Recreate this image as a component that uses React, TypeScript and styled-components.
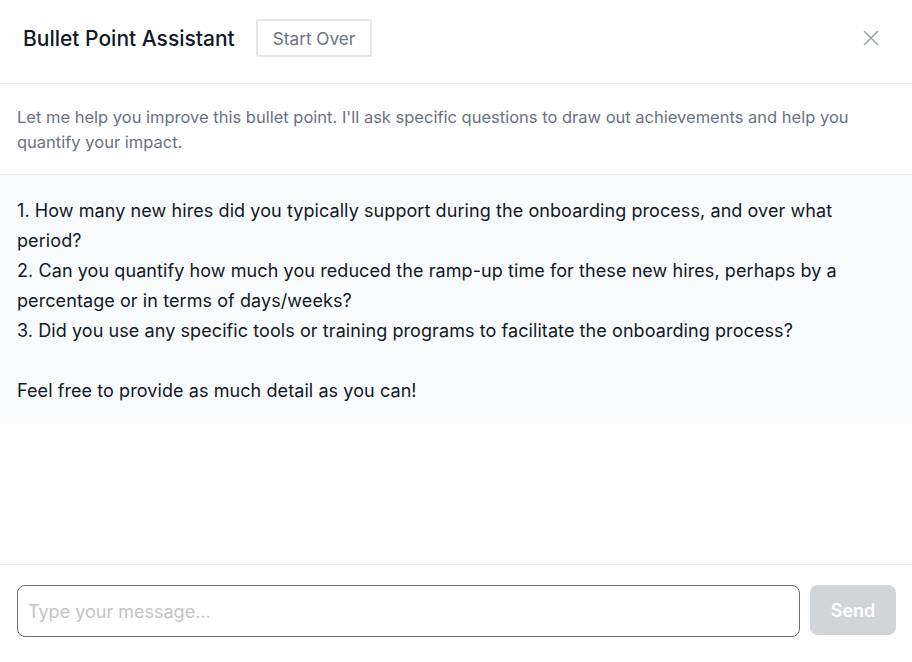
import React, { useState } from "react";
import styled, { createGlobalStyle } from "styled-components";

const GlobalStyle = createGlobalStyle`
  html, body, #root {
    margin: 0;
    padding: 0;
    height: 100%;
  }
  body {
    font-family: Inter, "Noto Sans", sans-serif;
    background: #ffffff;
    color: #111827;
  }
  * {
    box-sizing: border-box;
  }
`;

const Panel = styled.div`
  display: flex;
  flex-direction: column;
  height: 100vh;
  background: #ffffff;
`;

const Header = styled.header`
  display: flex;
  align-items: center;
  height: 84px;
  padding: 19px 23px 26px;
  border-bottom: 1px solid #e5e7eb;
`;

const Title = styled.h1`
  margin: 0;
  font-size: 21px;
  font-weight: 500;
  color: #111827;
`;

const OutlineButton = styled.button`
  margin-left: 21px;
  height: 38px;
  padding: 0 15px;
  border: 2px solid #e5e7eb;
  border-radius: 2px;
  background: #ffffff;
  color: #6b7280;
  font-family: inherit;
  font-size: 17.2px;
  cursor: pointer;
`;

const CloseButton = styled.button`
  margin-left: auto;
  display: flex;
  align-items: center;
  justify-content: center;
  width: 36px;
  height: 36px;
  padding: 0;
  border: none;
  background: none;
  color: #9ca3af;
  cursor: pointer;
`;

const Intro = styled.p`
  margin: 0;
  padding: 21px 17px 19px;
  font-size: 16.5px;
  line-height: 25px;
  color: #6b7280;
  border-bottom: 1px solid #e5e7eb;
`;

const Messages = styled.div`
  flex: 1;
  display: flex;
  flex-direction: column;
  align-items: flex-start;
`;

const Bubble = styled.div<{ $assistant?: boolean }>`
  width: 100%;
  padding: 21px 17px 18px;
  background: ${(p) => (p.$assistant ? "#f9fafb" : "#ffffff")};
  font-size: 18px;
  letter-spacing: 0.08px;
  line-height: 30px;
  color: #111827;
  white-space: pre-wrap;
`;

const Footer = styled.form`
  display: flex;
  align-items: flex-start;
  gap: 10px;
  padding: 20px 16px 25px 17px;
  border-top: 1px solid #e5e7eb;
`;

const Input = styled.input`
  flex: 1;
  height: 52px;
  padding: 0 10px;
  border: 1px solid #6b7280;
  border-radius: 8px;
  font-family: inherit;
  font-size: 18px;
  color: #111827;
  outline: none;

  &::placeholder {
    color: #c4c4c4;
  }
`;

const SendButton = styled.button`
  width: 86px;
  height: 50px;
  border: none;
  border-radius: 8px;
  background: #d1d5db;
  color: #ffffff;
  font-family: inherit;
  font-size: 18px;
  font-weight: 600;
`;

const reply = `1. How many new hires did you typically support during the onboarding process, and over what period?
2. Can you quantify how much you reduced the ramp-up time for these new hires, perhaps by a percentage or in terms of days/weeks?
3. Did you use any specific tools or training programs to facilitate the onboarding process?

Feel free to provide as much detail as you can!`;

export default function App() {
  const [text, setText] = useState("");

  return (
    <Panel>
      <GlobalStyle />
      <Header>
        <Title>Bullet Point Assistant</Title>
        <OutlineButton type="button">Start Over</OutlineButton>
        <CloseButton type="button" aria-label="Close">
          <svg width="20" height="20" viewBox="0 0 20 20" fill="none" stroke="currentColor" strokeWidth="1.6" strokeLinecap="round">
            <path d="M3.5 3.5l13 13M16.5 3.5l-13 13" />
          </svg>
        </CloseButton>
      </Header>
      <Intro>
        Let me help you improve this bullet point. I'll ask specific questions to draw out achievements and help you quantify your impact.
      </Intro>
      <Messages>
        <Bubble $assistant>{reply}</Bubble>
      </Messages>
      <Footer onSubmit={(e) => e.preventDefault()}>
        <Input
          placeholder="Type your message..."
          value={text}
          onChange={(e) => setText(e.target.value)}
        />
        <SendButton type="submit" disabled={!text}>
          Send
        </SendButton>
      </Footer>
    </Panel>
  );
}
